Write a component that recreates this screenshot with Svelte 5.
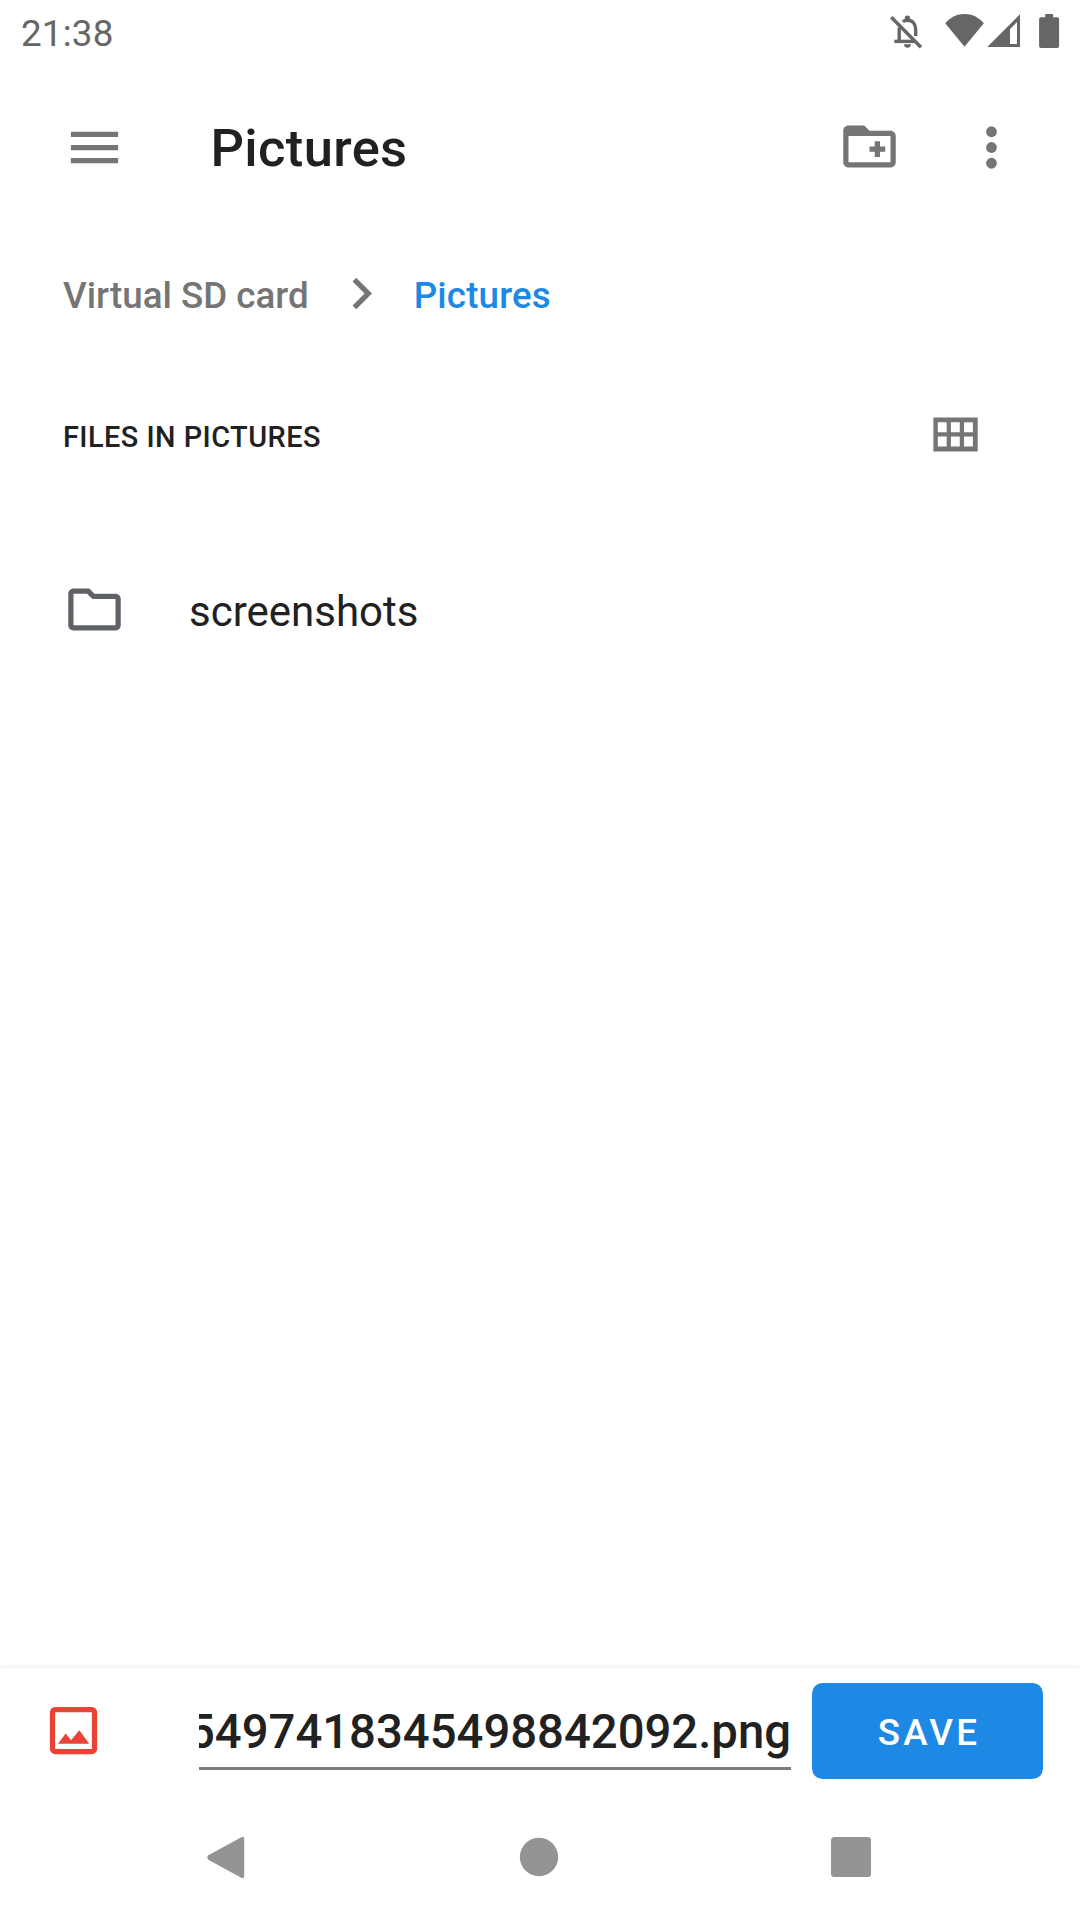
<script lang="ts">
  let title = 'Pictures';
  let root = 'Virtual SD card';
  let folders = ['screenshots'];
  let fileName = '5497418345498842092.png';
</script>

<div class="screen">
  <header class="status">
    <span class="clock">21:38</span>
    <svg class="status-icons" width="172" height="63" viewBox="888 0 172 63" fill="#666">
      <!-- muted bell -->
      <g fill="none" stroke="#666" stroke-width="3.4">
        <path d="M891.3 17.3L921 47.3" />
        <path d="M894.3 41.4H915" />
        <path d="M899.2 41V27.500M902.800 21.700c1.300-.9 2.900-1.500 4.600-1.500 5.200 0 8.300 3.900 8.300 9.800v6" />
      </g>
      <path d="M904.800 19v-.8a2.700 2.700 0 0 1 5.400 0v.8zM904 44.300h7c0 2-1.500 3.500-3.500 3.500s-3.500-1.500-3.500-3.500z" />
      <!-- wifi -->
      <path d="M945.200 23.200C950.600 17.200 957 14 964.500 14s13.900 3.200 19.300 9.200L964.500 46.700z" />
      <!-- signal -->
      <path fill-rule="evenodd" d="M1020 14.300V47H987.200zM1017 21.900L1010 28.900V44H1017z" />
      <!-- battery -->
      <path d="M1045.200 14h7.900v3.300h4a2 2 0 0 1 2 2V46a2 2 0 0 1-2 2h-16a2 2 0 0 1-2-2V19.300a2 2 0 0 1 2-2h4.100z" />
    </svg>
  </header>

  <div class="toolbar">
    <svg class="icon" viewBox="0 0 24 24" fill="#757575">
      <path d="M3 18h18v-2H3v2zm0-5h18v-2H3v2zm0-7v2h18V6H3z" />
    </svg>
    <h1>{title}</h1>
    <svg class="icon new-folder" viewBox="0 0 24 24" fill="#757575">
      <path fill-rule="evenodd" d="M20 6h-8l-2-2H4c-1.110 0-1.990.89-1.990 2L2 18c0 1.110.89 2 2 2h16c1.110 0 2-.89 2-2V8c0-1.110-.89-2-2-2zm0 12H4V8h16v10z" />
      <path d="M14 16h2v-2h2v-2h-2v-2h-2v2h-2v2h2z" />
    </svg>
    <svg class="icon" viewBox="0 0 24 24" fill="#757575">
      <circle cx="12" cy="6" r="2.05" />
      <circle cx="12" cy="12" r="2.05" />
      <circle cx="12" cy="18" r="2.05" />
    </svg>
  </div>

  <nav class="crumbs">
    <span>{root}</span>
    <svg class="icon" viewBox="0 0 24 24" fill="#757575">
      <path d="M10 6L8.590 7.410 13.170 12l-4.580 4.590L10 18l6-6z" />
    </svg>
    <span class="current">{title}</span>
  </nav>

  <div class="section">
    <h2>Files in {title}</h2>
    <svg width="45" height="35" viewBox="0 0 45 35" fill="#757575">
      <path fill-rule="evenodd" d="M.4.4h44.300v34.200H.4zM4.800 5.200v10h8.900v-10zM17.900 5.200v10h8.900v-10zM31 5.200v10h8.900v-10zM4.800 19.400v10.200h8.900V19.400zM17.900 19.400v10.200h8.900V19.400zM31 19.400v10.200h8.900V19.400z" />
    </svg>
  </div>

  <main>
    {#each folders as folder}
      <div class="row">
        <svg class="icon" viewBox="0 0 24 24" fill="#5f6368">
          <path d="M9.170 6l2 2H20v10H4V6h5.170M10 4H4c-1.100 0-1.990.9-1.990 2L2 18c0 1.100.9 2 2 2h16c1.100 0 2-.9 2-2V8c0-1.100-.9-2-2-2h-8l-2-2z" />
        </svg>
        <span>{folder}</span>
      </div>
    {/each}
  </main>

  <footer class="save-bar">
    <svg class="icon" viewBox="0 0 24 24" fill="#ea4335">
      <path fill-rule="evenodd" d="M5 3h14a2 2 0 0 1 2 2v14a2 2 0 0 1-2 2H5a2 2 0 0 1-2-2V5a2 2 0 0 1 2-2zM5 5v14h14V5z" />
      <path d="M6.100 17L9 13.100l2.100 2.600 3.100-3.800 3.800 5.100z" />
    </svg>
    <div class="field"><span>{fileName}</span></div>
    <button>Save</button>
  </footer>

  <div class="nav">
    <svg width="38" height="43" viewBox="0 0 38 43"><path d="M1.300 19.200L34.300 1.200Q37.200 0 37.200 3V40Q37.200 43 34.300 41.800L1.300 23.800Q-.6 21.500 1.300 19.200z" /></svg>
    <svg width="42" height="40" viewBox="0 0 42 40"><circle cx="22" cy="20" r="19.200" /></svg>
    <svg width="40" height="40" viewBox="0 0 40 40"><rect width="40" height="40" rx="3.500" /></svg>
  </div>
</div>

<style>
  :global(body) {
    background: #fff;
  }

  .screen {
    display: flex;
    flex-direction: column;
    width: 1080px;
    height: 1920px;
    overflow: hidden;
    background: #fff;
    color: #212121;
    font-family: Roboto, sans-serif;
  }

  svg {
    display: block;
    flex: none;
  }

  .icon {
    width: 63px;
    height: 63px;
  }

  .status {
    display: flex;
    justify-content: space-between;
    height: 63px;
    padding: 0 20px 0 21px;
    box-sizing: border-box;
  }

  .clock {
    color: #666;
    font-size: 36.75px;
    letter-spacing: 0.2px;
    line-height: 67px;
  }

  .toolbar {
    display: flex;
    align-items: center;
    height: 168px;
    padding: 0 57px 0 63px;
  }

  h1 {
    flex: 1;
    margin: 0;
    padding: 3px 0 0 84.5px;
    font-size: 52.5px;
    font-weight: 500;
    letter-spacing: 0.35px;
    line-height: 63px;
  }

  .new-folder {
    margin: 0 59px 2px 0;
  }

  .crumbs {
    display: flex;
    align-items: center;
    height: 126px;
    padding-left: 63px;
    color: #757575;
    font-size: 36.75px;
    font-weight: 500;
    line-height: 42px;
  }

  .crumbs span {
    padding-top: 3px;
  }

  .crumbs .icon {
    margin: 0 21px 1px;
  }

  .crumbs .current {
    color: #1e88e5;
    letter-spacing: 0.15px;
  }

  .section {
    display: flex;
    align-items: center;
    justify-content: space-between;
    height: 154px;
    padding: 0 102.5px 0 63px;
  }

  h2 {
    margin: 0;
    padding-top: 5px;
    font-size: 28.875px;
    font-weight: 500;
    letter-spacing: 0.47px;
    line-height: 36px;
    text-transform: uppercase;
  }

  main {
    flex: 1;
  }

  .row {
    display: flex;
    align-items: center;
    height: 197px;
    padding-left: 63px;
    font-size: 42px;
    line-height: 50px;
  }

  .row span {
    padding: 4px 0 0 63px;
  }

  .save-bar {
    display: flex;
    align-items: center;
    height: 126px;
    padding: 0 37px 0 42px;
    background: #fff;
    box-shadow: 0 -1px 5px rgba(0, 0, 0, 0.08);
    clip-path: inset(-8px 0 0 0);
  }

  .save-bar .icon {
    margin-bottom: 1px;
  }

  /* long names stay scrolled to their end */
  .field {
    display: flex;
    flex: 1;
    justify-content: flex-end;
    height: 74px;
    margin: 2px 21px 1px 94px;
    border-bottom: 3px solid #7c7c7c;
    overflow: hidden;
    font-size: 47.25px;
    font-weight: 500;
    line-height: 79px;
    white-space: nowrap;
  }

  button {
    width: 231px;
    height: 96px;
    padding: 3px 0 0 3px;
    border: 0;
    border-radius: 10.5px;
    background: #1e88e5;
    color: #fff;
    font: 500 36.75px/42px Roboto, sans-serif;
    letter-spacing: 0.0892em;
    text-transform: uppercase;
  }

  .nav {
    display: flex;
    align-items: center;
    justify-content: space-between;
    height: 126px;
    padding: 0 209px 0 207px;
    fill: #949494;
  }
</style>
